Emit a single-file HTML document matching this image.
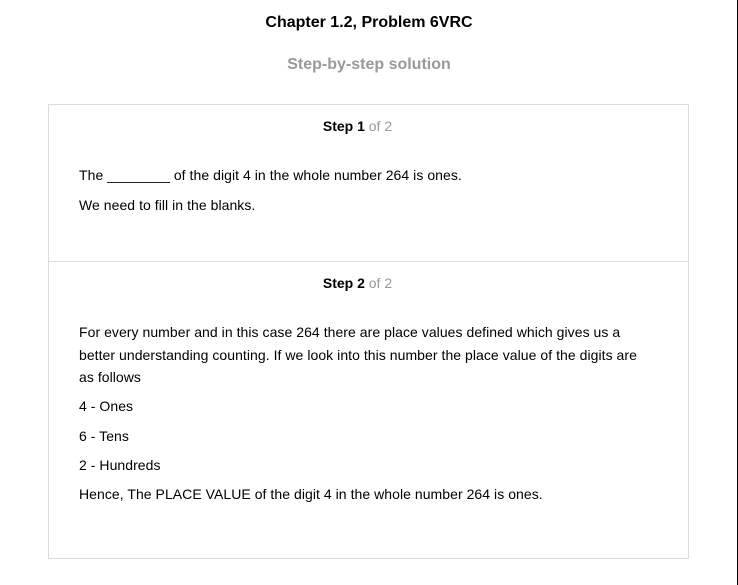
<!DOCTYPE html>
<html><head><style>
html,body{margin:0;padding:0;background:#fff;width:738px;height:585px;overflow:hidden;font-family:"Liberation Sans",Arial,sans-serif;color:#000}
.t{position:absolute;left:0;width:738px;text-align:center;font-weight:bold;font-size:16px;white-space:nowrap}
.box{position:absolute;left:48px;top:104px;width:639px;height:453px;border:1px solid #dcdcdc}
.div{position:absolute;left:48px;top:261px;width:641px;height:1px;background:#dcdcdc}
.s{position:absolute;left:37px;width:641px;text-align:center;font-size:14px;white-space:nowrap}
.s b{color:#000}.s span{color:#999}
.p{position:absolute;left:79px;font-size:14px;white-space:nowrap;letter-spacing:0.05px}
.edge{position:absolute;left:737px;top:0;width:1px;height:585px;background:#000}
</style></head><body>
<div class="t" style="top:14px">Chapter 1.2, Problem 6VRC</div>
<div class="t" style="top:56px;color:#999">Step-by-step solution</div>
<div class="box"></div>
<div class="div"></div>
<div class="s" style="top:118px"><b>Step 1</b> <span>of 2</span></div>
<div class="p" style="top:167px">The ________ of the digit 4 in the whole number 264 is ones.</div>
<div class="p" style="top:197px">We need to fill in the blanks.</div>
<div class="s" style="top:275px"><b>Step 2</b> <span>of 2</span></div>
<div class="p" style="top:321px;line-height:22.5px">For every number and in this case 264 there are place values defined which gives us a<br>better understanding counting. If we look into this number the place value of the digits are<br>as follows</div>
<div class="p" style="top:398px">4 - Ones</div>
<div class="p" style="top:428px">6 - Tens</div>
<div class="p" style="top:457px">2 - Hundreds</div>
<div class="p" style="top:486px">Hence, The PLACE VALUE of the digit 4 in the whole number 264 is ones.</div>
<div class="edge"></div>
</body></html>
